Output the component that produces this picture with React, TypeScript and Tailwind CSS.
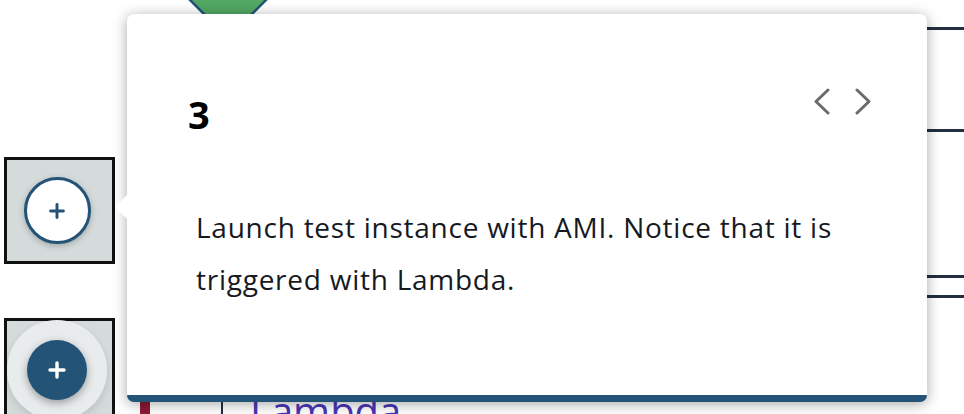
import { Plus } from "lucide-react";

function Chevron({ dir }: { dir: "left" | "right" }) {
  return (
    <svg width="17" height="27" viewBox="0 0 17 27" fill="none">
      <polyline
        points={dir === "left" ? "15,2 3,13.5 15,25" : "2,2 14,13.5 2,25"}
        stroke="#6b6b6b"
        strokeWidth="3"
        strokeLinecap="round"
        strokeLinejoin="round"
      />
    </svg>
  );
}

function DiagramBackground() {
  return (
    <>
      {/* diamond node */}
      <svg className="absolute left-0 top-0" width="320" height="40">
        <polygon points="228,38 154,-36 302,-36" fill="#52a864" stroke="#235478" strokeWidth="2.5" />
      </svg>

      {/* connector lines on the right */}
      <div className="absolute right-0 top-[27px] h-[3px] w-[80px] bg-[#232f3e]" />
      <div className="absolute right-0 top-[129px] h-[3px] w-[80px] bg-[#232f3e]" />
      <div className="absolute right-0 top-[275px] h-[3px] w-[80px] bg-[#232f3e]" />
      <div className="absolute right-0 top-[295px] h-[3px] w-[80px] bg-[#232f3e]" />

      {/* step node, outlined */}
      <div className="absolute left-[4px] top-[157px] flex h-[107px] w-[111px] items-center justify-center border-[3px] border-[#111] bg-[#d5dbdb] pr-[5px]">
        <div className="flex h-[67px] w-[67px] items-center justify-center rounded-full border-[3px] border-[#235478] bg-white shadow-[0_2px_6px_rgba(0,0,0,0.25)]">
          <Plus size={22} strokeWidth={3.2} color="#235478" />
        </div>
      </div>

      {/* step node, active */}
      <div className="absolute left-[4px] top-[318px] flex h-[110px] w-[111px] items-start justify-center border-[3px] border-[#111] bg-[#d5dbdb] pr-[5px]">
        <div className="-mt-[1px] flex h-[100px] w-[100px] shrink-0 items-center justify-center rounded-full bg-[#e8ecec] shadow-[0_4px_8px_rgba(0,0,0,0.12)]">
          <div className="flex h-[60px] w-[60px] items-center justify-center rounded-full bg-[#235478] shadow-[0_3px_8px_rgba(0,0,0,0.35)]">
            <Plus size={24} strokeWidth={3.4} color="#ffffff" />
          </div>
        </div>
      </div>

      {/* lambda node peeking under the card */}
      <div className="absolute left-[140px] top-[400px] h-[20px] w-[10px] bg-[#8c1a36]" />
      <div className="absolute left-[221px] top-[400px] h-[20px] w-[2px] bg-[#232f3e]" />
      <div className="absolute left-[250px] top-[391px] text-[40px] leading-none text-[#4a35b8] [font-family:'Open_Sans',sans-serif]">
        Lambda
      </div>
    </>
  );
}

export default function App() {
  return (
    <div className="relative h-[414px] w-[964px] overflow-hidden bg-white [font-family:'Open_Sans',sans-serif]">
      <DiagramBackground />

      {/* walkthrough popover */}
      <div className="absolute left-[127px] top-[14px] flex h-[388px] w-[800px] flex-col rounded-[7px] border-b-[7px] border-[#235478] bg-white shadow-[0_2px_14px_rgba(0,0,0,0.35)]">
        {/* caret */}
        <div className="absolute left-[-12px] top-[181px] h-0 w-0 border-y-[12px] border-r-[12px] border-y-transparent border-r-white" />

        <div className="flex items-start justify-between pl-[61px] pr-[55px] pt-[76px]">
          <span className="text-[38px] font-bold leading-[48px] text-black">3</span>
          <div className="-mt-[2px] flex gap-[25px]">
            <Chevron dir="left" />
            <Chevron dir="right" />
          </div>
        </div>

        <p className="mt-[63px] w-[740px] pl-[69px] text-[28px] leading-[52px] tracking-[0.75px] text-[#16191f]">
          Launch test instance with AMI. Notice that it is triggered with Lambda.
        </p>
      </div>
    </div>
  );
}
